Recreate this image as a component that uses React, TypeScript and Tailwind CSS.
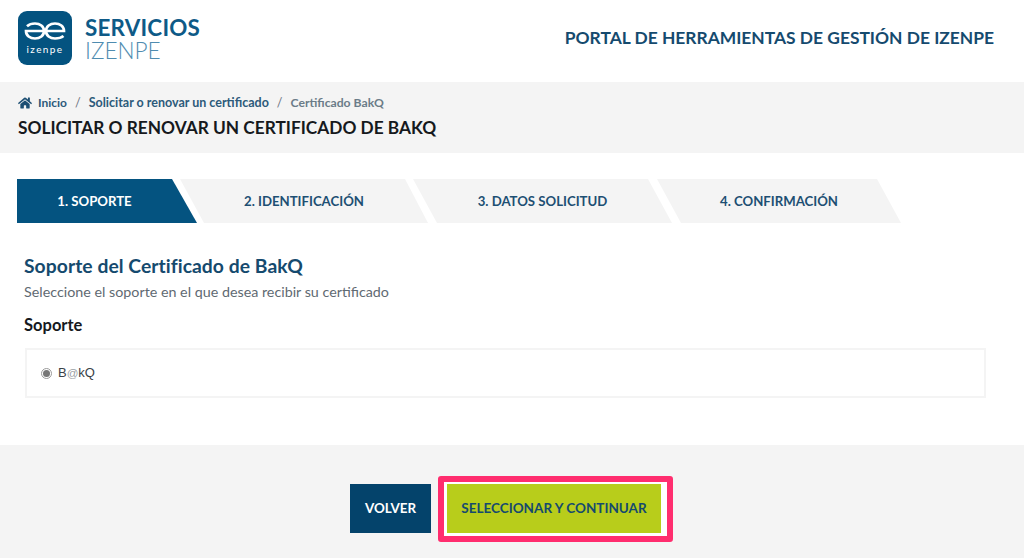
import { FaHome } from "react-icons/fa";

const font = "[font-family:Lato,'Open_Sans',sans-serif]";

function Logo() {
  return (
    <div className="w-[54px] h-[54px] rounded-[9px] bg-[#045380] flex flex-col items-center shrink-0">
      <svg width="42" height="18" viewBox="0 0 42 18" className="mt-[11px]" fill="none" stroke="#fff" strokeWidth="2.7">
        <path d="M3 4.2 C5 2.4 8 1.5 11 1.5 C16 1.5 20 4.4 20 9 C20 13.6 16 16.5 11 16.5 C6 16.5 2 13.6 2 9 H 20" />
        <path d="M22 9 H40 C40 4.4 36 1.5 31 1.5 C26 1.5 22 4.4 22 9 C22 13.6 26 16.5 31 16.5 C34.5 16.5 37.5 15.6 39.5 14" />
      </svg>
      <span className="text-[10px] leading-none text-white mt-[4px] tracking-[0.14em] font-normal">izenpe</span>
    </div>
  );
}

function Step({ label, cls }: { label: string; cls: string }) {
  return (
    <div className={`h-[44px] pt-[2px] flex items-center justify-center text-[13.2px] font-bold ${cls}`}>
      {label}
    </div>
  );
}

export default function App() {
  return (
    <div className={`w-[1024px] h-[558px] overflow-hidden bg-white flex flex-col ${font}`}>
      <header className="h-[82px] shrink-0 flex items-center justify-between pl-[18px] pr-[30px]">
        <div className="flex items-center gap-[13px] mt-[-6px]">
          <Logo />
          <div className="flex flex-col mt-[1px]">
            <span className="text-[22.4px] leading-[23px] font-bold text-[#0e5a87] tracking-[0.01em]">SERVICIOS</span>
            <span className="text-[22.6px] leading-[23px] font-light text-[#4f8cb0]">IZENPE</span>
          </div>
        </div>
        <div className="text-[17.4px] font-bold text-[#154a6e] mt-[-5px]">PORTAL DE HERRAMIENTAS DE GESTIÓN DE IZENPE</div>
      </header>

      <section className="h-[71px] shrink-0 bg-[#f4f4f4] pl-[18px] pt-[13px]">
        <nav className="flex items-center text-[12.5px] font-bold text-[#2c5a7a] h-[16px]">
          <FaHome className="text-[14px] text-[#1d4f73] mr-[6px]" />
          <span className="text-[12px]">Inicio</span>
          <span className="mx-[8px] font-normal text-[#6b7280]">/</span>
          <span>Solicitar o renovar un certificado</span>
          <span className="mx-[8px] font-normal text-[#6b7280]">/</span>
          <span className="text-[#6b7c88] text-[12.2px]">Certificado BakQ</span>
        </nav>
        <h1 className="text-[17.3px] leading-[20px] font-bold text-[#16191d] mt-[7px]">SOLICITAR O RENOVAR UN CERTIFICADO DE BAKQ</h1>
      </section>

      <div className="flex pl-[17px] mt-[26px] shrink-0">
        <Step label="1. SOPORTE" cls="w-[180px] bg-[#045380] text-white pr-[25px] [clip-path:polygon(0_0,155px_0,100%_100%,0_100%)]" />
        <Step label="2. IDENTIFICACIÓN" cls="w-[248px] ml-[-17px] bg-[#f4f4f4] text-[#1d4f73] [clip-path:polygon(0_0,225px_0,100%_100%,24px_100%)]" />
        <Step label="3. DATOS SOLICITUD" cls="w-[259px] ml-[-15px] bg-[#f4f4f4] text-[#1d4f73] [clip-path:polygon(0_0,235px_0,100%_100%,24px_100%)]" />
        <Step label="4. CONFIRMACIÓN" cls="w-[244px] ml-[-15px] bg-[#f4f4f4] text-[#1d4f73] [clip-path:polygon(0_0,220px_0,100%_100%,24px_100%)]" />
      </div>

      <main className="pl-[24px] pr-[38px] pt-[32px] flex-1">
        <h2 className="text-[19.3px] leading-[22px] font-bold text-[#154a6e] tracking-[0.003em]">Soporte del Certificado de BakQ</h2>
        <p className="text-[14.3px] leading-[18px] text-[#5f6a72] mt-[6px]">Seleccione el soporte en el que desea recibir su certificado</p>
        <div className="text-[16.5px] leading-[20px] font-bold text-[#16191d] mt-[14px]">Soporte</div>
        <div className="mt-[13px] ml-[1px] h-[50px] border-2 border-[#f4f4f4] flex items-center pl-[14px]">
          <span className="w-[11px] h-[11px] rounded-full border border-[#9a9a9a] bg-white flex items-center justify-center mr-[6px]">
            <span className="w-[7px] h-[7px] rounded-full bg-[#777]" />
          </span>
          <span className="text-[13px] text-[#3a4248] [font-family:'Liberation_Sans',sans-serif]">
            B<span className="text-[#9aa0a4] text-[11.5px]">@</span>kQ
          </span>
        </div>
      </main>

      <footer className="h-[113px] shrink-0 bg-[#f4f4f4] flex items-start justify-center gap-[7px] pt-[31px] pr-[1px]">
        <button className="w-[81px] h-[49px] mt-[8px] bg-[#04436b] text-white text-[13.4px] font-bold">VOLVER</button>
        <div className="border-[6px] border-[#ff2d6e] rounded-[3px] bg-white pl-[3px] pr-[6px] pt-[2px] pb-[3px]">
          <button className="w-[214px] h-[49px] bg-[#b8cd1b] text-[#154a6e] text-[13.5px] font-bold block">SELECCIONAR Y CONTINUAR</button>
        </div>
      </footer>
    </div>
  );
}
